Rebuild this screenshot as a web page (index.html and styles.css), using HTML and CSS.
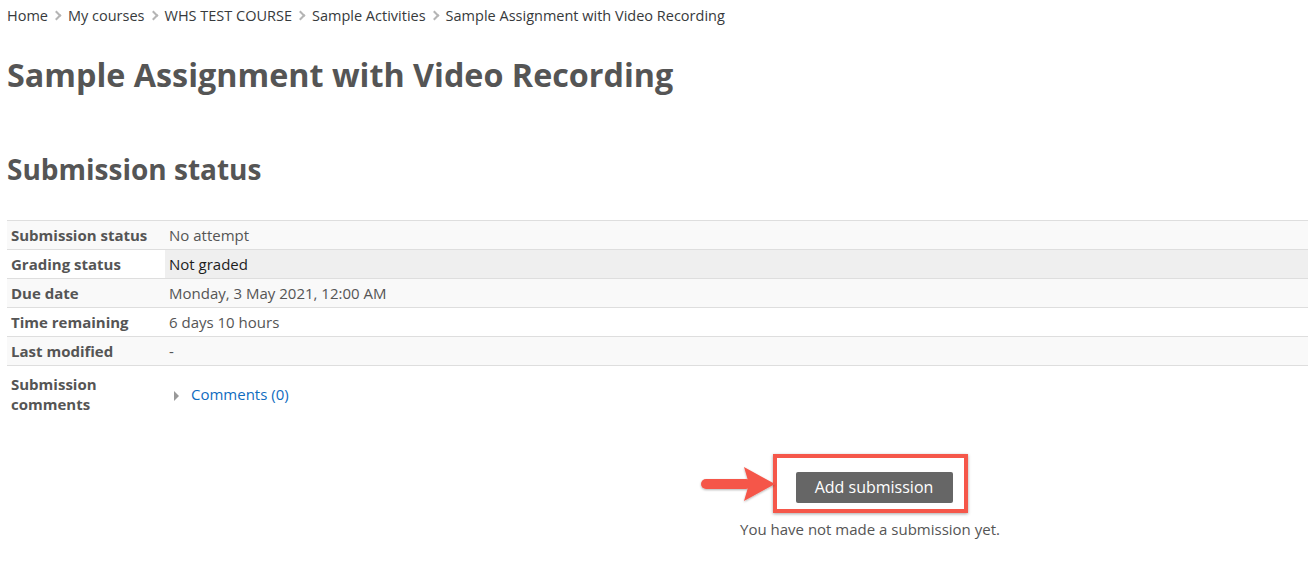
FILE: index.html
```html
<!DOCTYPE html>
<html>
<head>
<meta charset="utf-8">
<link rel="stylesheet" href="styles.css">
</head>
<body>
<div class="page">
  <nav class="crumbs">
    <span>Home</span><span class="sep"></span>
    <span>My courses</span><span class="sep"></span>
    <span>WHS TEST COURSE</span><span class="sep"></span>
    <span>Sample Activities</span><span class="sep"></span>
    <span>Sample Assignment with Video Recording</span>
  </nav>
  <h1 class="title">Sample Assignment with Video Recording</h1>
  <h2 class="subtitle">Submission status</h2>
  <table class="status">
    <tr class="odd"><th>Submission status</th><td>No attempt</td></tr>
    <tr class="hover"><th>Grading status</th><td>Not graded</td></tr>
    <tr class="odd"><th>Due date</th><td>Monday, 3 May 2021, 12:00 AM</td></tr>
    <tr><th>Time remaining</th><td>6 days 10 hours</td></tr>
    <tr class="odd"><th>Last modified</th><td>-</td></tr>
    <tr class="tall"><th>Submission<br>comments</th><td><span class="tri"></span><a class="link" href="#">Comments (0)</a></td></tr>
  </table>
  <div class="actions">
    <div class="highlight">
      <svg class="arrow" width="78" height="40" viewBox="0 0 78 40">
        <defs>
          <filter id="sh" x="-10%" y="-20%" width="120%" height="140%">
            <feDropShadow dx="0" dy="1" stdDeviation="1" flood-color="#000" flood-opacity="0.3"/>
          </filter>
        </defs>
        <g filter="url(#sh)" fill="#f5574a">
          <rect x="2" y="15" width="50" height="10" rx="5"/>
          <path d="M45 3 L76 20 L45 37 L50 20 Z"/>
        </g>
      </svg>
      <button class="btn">Add submission</button>
    </div>
    <p class="note">You have not made a submission yet.</p>
  </div>
</div>
</body>
</html>
```
FILE: styles.css
```css
html, body {
  margin: 0;
  padding: 0;
  background: #fff;
}
body {
  font-family: "Open Sans", "Liberation Sans", sans-serif;
  color: #373a3c;
  font-size: 15px;
}
.page {
  padding: 0 0 0 7px;
  overflow: hidden;
}
.crumbs {
  display: flex;
  align-items: center;
  height: 30px;
  font-size: 14.5px;
  color: #373a3c;
}
.sep {
  width: 5px;
  height: 5px;
  border-right: 2px solid #b5b5b5;
  border-top: 2px solid #b5b5b5;
  transform: rotate(45deg);
  margin: 0 8px 0 5px;
}
.title {
  margin: 24px 0 0;
  font-size: 32.3px;
  font-weight: 700;
  color: #555;
  line-height: 40px;
}
.subtitle {
  margin: 57px 0 0;
  font-size: 28px;
  font-weight: 700;
  color: #555;
  line-height: 36px;
}
.status {
  margin-top: 33px;
  width: 1301px;
  border-collapse: collapse;
}
.status th, .status td {
  text-align: left;
  vertical-align: middle;
  border-top: 1px solid #dedede;
  height: 28px;
  padding: 0 4px;
  line-height: 20px;
}
.status th {
  width: 150px;
  font-weight: 700;
  color: #555;
}
.status td {
  color: #555;
}
.status tr.odd th, .status tr.odd td {
  background: #f9f9f9;
}
.status tr.hover td {
  background: #efefef;
  color: #1d1d1d;
}
.status tr.tall th, .status tr.tall td {
  height: 56px;
}
.tri {
  display: inline-block;
  width: 0;
  height: 0;
  border-left: 5px solid #999;
  border-top: 5px solid transparent;
  border-bottom: 5px solid transparent;
  margin: 0 12px 0 5px;
  vertical-align: -1px;
}
.link {
  color: #0f6cbf;
  text-decoration: none;
}
.actions {
  margin-left: 425px;
  display: flex;
  flex-direction: column;
  align-items: center;
  padding-top: 32px;
}
.highlight {
  position: relative;
  border: 4px solid #f5574a;
  box-shadow: 0 1px 3px rgba(0,0,0,0.35);
  padding: 14px 11px 6px 19px;
}
.arrow {
  position: absolute;
  left: -78px;
  top: 6px;
  display: block;
}
.btn {
  display: block;
  font-family: "Open Sans", "Liberation Sans", sans-serif;
  font-size: 16px;
  color: #fff;
  background: #666;
  border: 0;
  border-radius: 2px;
  padding: 0;
  height: 31px;
  line-height: 31px;
  width: 157px;
}
.note {
  margin: 6px 0 0;
  font-size: 15px;
  line-height: 20px;
  color: #555;
}
```
